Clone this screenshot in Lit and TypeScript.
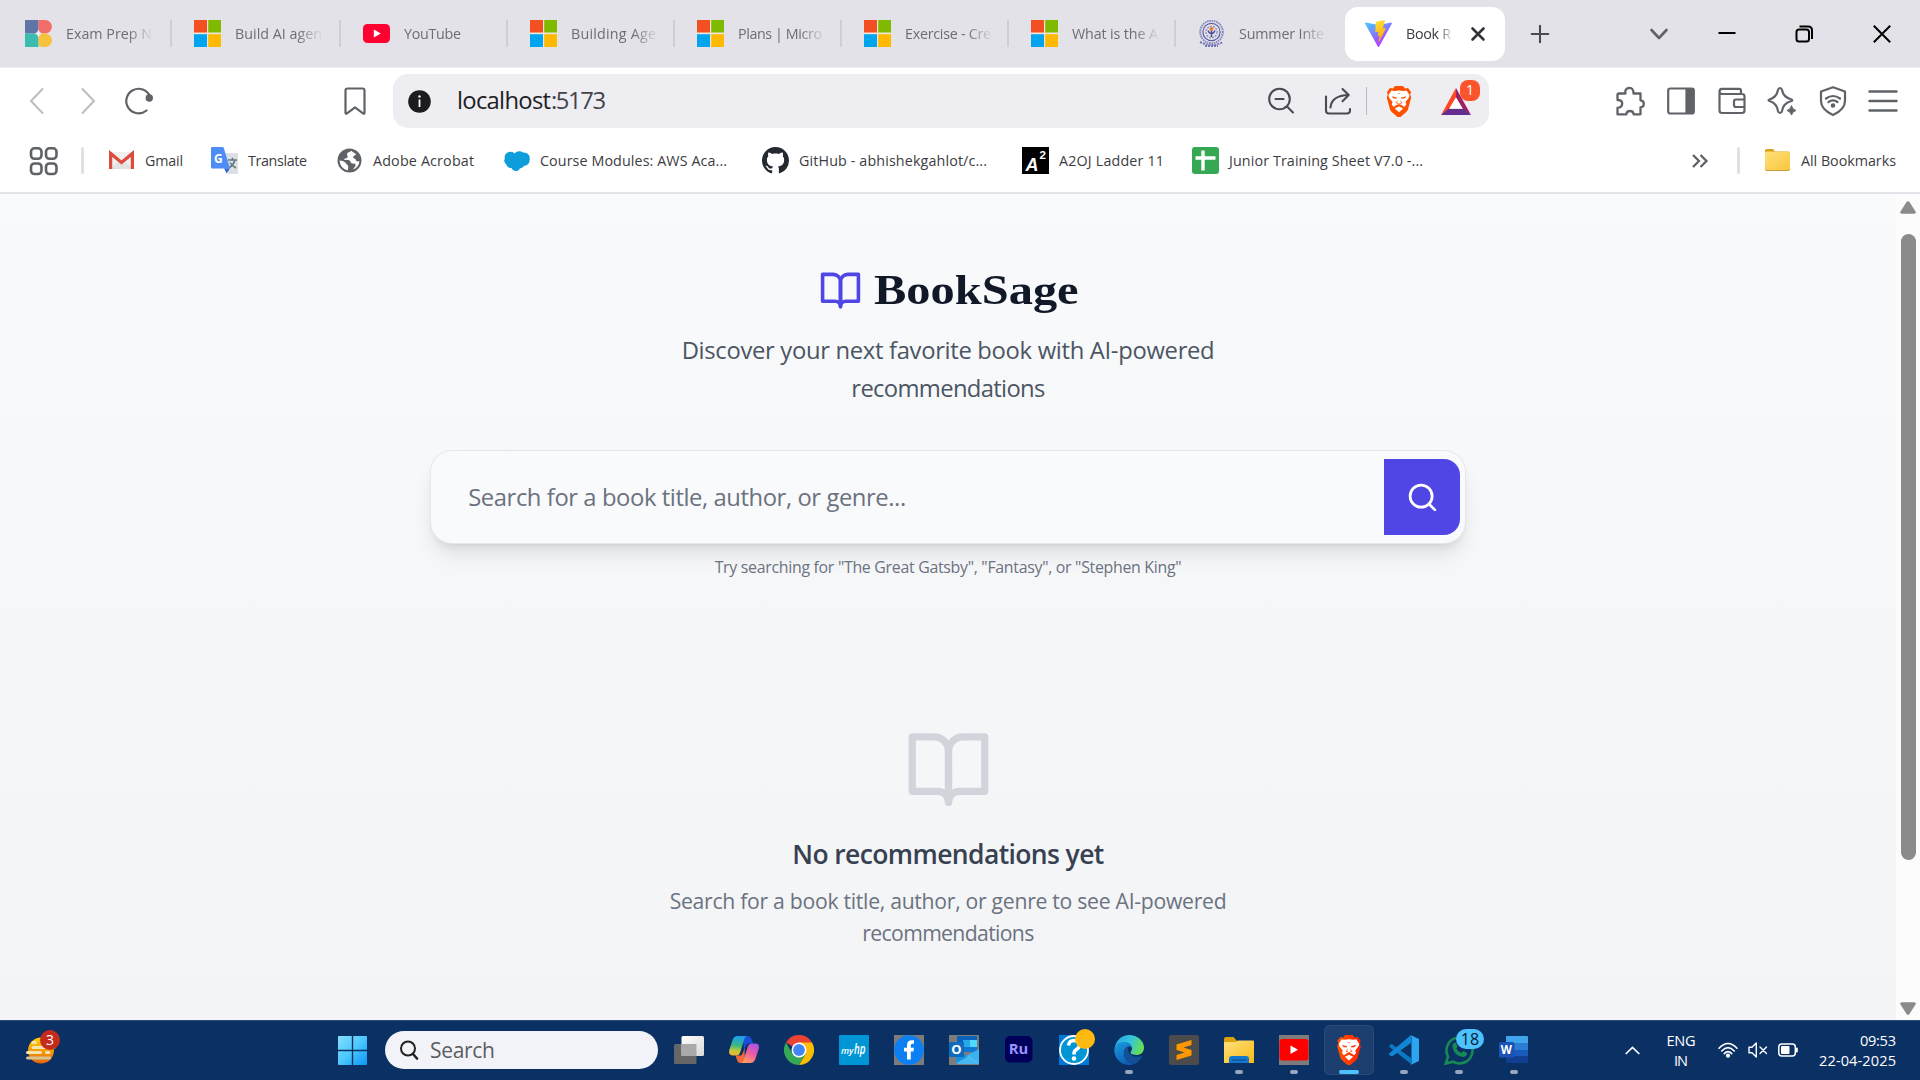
import { LitElement, html, svg, css, nothing } from "lit";
import { customElement, property } from "lit/decorators.js";

/* Single-line label that tracks its letters so the text spans exactly `w` pixels. */
@customElement("fit-text")
class FitText extends LitElement {
  @property({ type: Number }) w = 0;
  @property() text = "";
  static styles = css`
    :host { display: inline-block; white-space: pre; flex: none; }
    .t { display: inline-block; }
  `;
  render() {
    return html`<span class="t">${this.text}</span>`;
  }
  updated() {
    const t = this.renderRoot.querySelector(".t") as HTMLElement;
    t.style.letterSpacing = "0px";
    const natural = t.getBoundingClientRect().width;
    const n = Math.max(1, this.text.length - 1);
    t.style.letterSpacing = `${(this.w - natural) / n}px`;
    this.style.width = `${this.w}px`;
  }
}

const box = (w: number, h: number, body: unknown, vb = `0 0 ${w} ${h}`) =>
  html`<svg width=${w} height=${h} viewBox=${vb} fill="none">${body}</svg>`;

const line = (body: unknown, color = "#5f6368", sw = 2.2, size = 30) =>
  html`<svg width=${size} height=${size} viewBox="0 0 30 30" fill="none" stroke=${color}
    stroke-width=${sw} stroke-linecap="round" stroke-linejoin="round">${body}</svg>`;

const microsoft = box(27, 27, svg`
  <rect width="27" height="27" fill="#efe6d8"/>
  <path fill="#f25022" d="M0 0h13v12.5H0z"/><path fill="#7fba00" d="M14.2 0H27v12.5H14.2z"/>
  <path fill="#00a4ef" d="M0 14.2h13V27H0z"/><path fill="#ffb900" d="M14.2 14.2H27V27H14.2z"/>`);

const exam = box(27, 27, svg`
  <path fill="#5f75a8" d="M0 0h13.5v9.5a4 4 0 0 1-4 4H0z"/>
  <path fill="#f26d6a" d="M13.5 0h6.7a6.75 6.75 0 0 1 0 13.5h-2.7a4 4 0 0 1-4-4z"/>
  <path fill="#3bbcae" d="M0 13.5h9.5a4 4 0 0 1 4 4V27H0z"/>
  <path fill="#f7c23c" d="M17.5 13.5h2.7a6.75 6.75 0 0 1 0 13.5h-2.7a4 4 0 0 1-4-4v-5.500a4 4 0 0 1 4-4z"/>
  <path fill="#eceaf0" d="M13.500 9.300q.8 3.400 4 4.200q-3.200.8-4 4.200q-.8-3.400-4-4.200q3.200-.8 4-4.200z"/>`);

const youtube = box(27, 27, svg`<rect y="4" width="27" height="19" rx="4.500" fill="#ff0033"/>
  <path fill="#fff" d="M10.800 9.600v7.800l7-3.900z"/>`);

const crest = box(27, 27, svg`
  <circle cx="13.500" cy="12" r="11.300" stroke="#8a8abf" stroke-width="2" stroke-dasharray="1.600 .7"/>
  <circle cx="13.500" cy="12" r="8.600" stroke="#5b5ba6" stroke-width="1.200"/>
  <circle cx="13.500" cy="12" r="5.600" stroke="#8f8fc4" stroke-width="1.400" stroke-dasharray="2 1"/>
  <path stroke="#4c4c9c" stroke-width="1.500" d="M13.500 9v8M10 10.500q1 3 3.500 3.500q2.500-.5 3.500-3.500"/>
  <circle cx="13.500" cy="9" r="2" fill="#ee7d3b"/>
  <path stroke="#7777b6" stroke-width="2" stroke-dasharray="2 1" d="M2 22q11.500 6 23 0M7 26h13"/>`);

const vite = box(27, 27, svg`
  <defs>
    <linearGradient id="va" x1="0" y1="0" x2=".6" y2="1"><stop stop-color="#41d1ff"/><stop offset=".7" stop-color="#9b5cff"/><stop offset="1" stop-color="#bd34fe"/></linearGradient>
    <linearGradient id="vb" x1=".4" y1="0" x2=".6" y2="1"><stop stop-color="#ffdd35"/><stop offset="1" stop-color="#ffa800"/></linearGradient>
  </defs>
  <path fill="url(#va)" d="M26.800 3.800 14.200 26.500a.8.800 0 0 1-1.400 0L.1 3.800a.8.800 0 0 1 .8-1.200l12.600 2.300L26 2.600a.8.800 0 0 1 .8 1.200z"/>
  <path fill="url(#vb)" d="M19.500.1 11.500 1.800q-.8.200-.8.800l-.4 9.200c0 .4.300.5.600.5l2.600-.6-.8 3.900c0 .3.200.5.500.4l1.600-.5-1.200 6c0 .4.400.6.600.2l6.600-13.100c.1-.3-.1-.5-.4-.5l-2.600.5L20 .5q0-.4-.5-.4z"/>`);

const brave = (w: number, h: number, grad = false) => box(w, h, svg`
  <defs><linearGradient id="brg" x1="0" y1="0" x2="1" y2="0"><stop stop-color="#ff5500"/><stop offset="1" stop-color="#ff2000"/></linearGradient></defs>
  <path fill=${grad ? "url(#brg)" : "#ff5000"} d="M7 2.500 9 0h8l2 2.500 3-.5 3 4-.8 2.500 1 3-3.400 12.500-1.500 2L14.500 31h-3l-5.800-5-1.500-2L.8 11.500l1-3L1 6l3-4z"/>
  <path fill="#fff" d="M13 4.500 17.500 5l3-.5 3 4.500-.5 2.500-3.500 4.500.8 2.500-2 2.500-3-2.200L13 18.300l-2.300.5-3 2.200-2-2.500.8-2.500L3 11.500 2.500 9l3-4.500 3 .5zM13 20.300l4.200 2.200L13 26.300 8.800 22.500z"/>
  <path fill=${grad ? "url(#brg)" : "#ff5000"} d="m5.500 10.200 5.500 1.300-.5 1.300-3.300-.5zM20.500 10.200 15 11.500l.5 1.300 3.300-.5zM11.300 7.500h3.400l-.8.500h-1.800zM11 13l.7 2.500-1.200 1 2.500 1.200 2.500-1.200-1.200-1L15 13l-.3 2 1.800 1.700-3.500 1.800-3.500-1.800L11.300 15z"/>`, "0 0 26 31");

const globe = box(27, 27, svg`<circle cx="13.500" cy="13.500" r="12" fill="#5f6368"/>
  <path fill="#fff" d="M15 3.800c-1 1.700-3.500 1.200-4 3-.3 1.500 1 2.200.6 3.500-.6 1.600-3 .6-3.600 2.400l4.500.2c2.300.3 2 3.300 4 3.700 1.600.3 3.600-.2 3 2.200-.4 1.500-1.800 2-2.500 3.800a10 10 0 0 0 6.400-8.600c-1.600.8-3.400.3-3.700-1.300-.2-1.500-2.600-.6-2.500-2.600.2-1.700 2.400-1 2.700-3z"/>
  <path fill="#fff" d="M3.600 13.600c2.300 0 5.500 1.300 6.500 3 .6 1.200 2.300 1.500 2.200 3.200l-.6 3.600a10 10 0 0 1-8.100-9.800z"/>`);

const gmail = box(27, 27, svg`<path fill="#efefef" d="M2 5h23v17H2z"/><path fill="#d9d9d9" d="m2 22 9-8 2.500 2 2.500-2 9 8z" opacity=".6"/>
  <path stroke="#dd4b3e" stroke-width="3.200" d="M2.600 22V6.500l10.900 9 10.900-9V22"/>`);

const translate = box(27, 27, svg`
  <path fill="#dcdfe3" d="M12 6h14q1 0 1 1v19q0 1-1 1H17z"/><path fill="#3a67cf" d="m13 21 6 .5-3.500 5z"/>
  <path fill="#4e8df5" d="M1 0h10.500q1 0 1.300 1L19 21.500H1q-1 0-1-1V1Q0 0 1 0z"/>
  <path stroke="#5d7680" stroke-width="1.500" d="M17 13h9M21.500 10.800V13M24 13q-1.500 5-5.500 7.500M19 15.500q2 3.500 6 5.500"/>
  <text x="3" y="15.500" font-family="Open Sans" font-size="12" font-weight="700" fill="#fff">G</text>`);

const cloud = box(27, 27, svg`<path fill="#0d9dda" d="M11.500 6.500a6 6 0 0 1 8.500-1 5.800 5.800 0 0 1 6.700 6.500q.3 6.500-5.800 7a4.800 4.800 0 0 1-4 2.500q-1.500 3-4.500 2.500-3-.5-4-3.100a4.700 4.700 0 0 1-5-3.200Q0 14.500 1.800 12q-.6-3.500 1-5 1.500-2.500 5-2.300Q10.500 4.800 11.500 6.500z"/>`);

const github = box(27, 27, svg`<path fill="#24292f" d="M8 0C3.580 0 0 3.580 0 8c0 3.540 2.290 6.530 5.470 7.590.4.070.55-.17.55-.38 0-.19-.01-.82-.01-1.490-2.010.37-2.530-.49-2.690-.94-.09-.23-.48-.94-.82-1.130-.28-.15-.68-.52-.01-.53.63-.01 1.080.58 1.230.82.72 1.210 1.870.87 2.330.66.07-.52.28-.87.51-1.070-1.780-.2-3.640-.89-3.640-3.950 0-.87.31-1.590.82-2.150-.08-.2-.36-1.020.08-2.120 0 0 .67-.21 2.200.82.64-.18 1.320-.27 2-.27s1.360.09 2 .27c1.530-1.040 2.200-.82 2.200-.82.44 1.100.16 1.920.08 2.120.51.56.82 1.270.82 2.150 0 3.070-1.870 3.750-3.650 3.950.29.25.54.73.54 1.480 0 1.070-.01 1.930-.01 2.200 0 .21.15.46.55.38A8.010 8.010 0 0 0 16 8c0-4.420-3.580-8-8-8z"/>`, "0 0 16 16");

const a2oj = box(27, 27, svg`<rect width="27" height="27" fill="#000"/>
  <text x="3.500" y="23.500" font-family="Liberation Sans" font-size="19" font-weight="700" font-style="italic" textLength="13" lengthAdjust="spacingAndGlyphs" fill="#fff">A</text>
  <text x="17.500" y="11.500" font-family="Liberation Sans" font-size="11.500" font-weight="700" fill="#fff">2</text>`);

const sheet = box(27, 27, svg`<rect width="27" height="27" rx="3" fill="#34a853"/>
  <path stroke="#fff" stroke-width="3.400" d="M11 3.500v20M3.500 11h20"/>`);

const folder = box(27, 27, svg`<defs><linearGradient id="fo" x1="0" y1="0" x2="1" y2="1"><stop stop-color="#ffe07a"/><stop offset="1" stop-color="#fac63c"/></linearGradient></defs>
  <path fill="#d9a014" d="M1 4q0-2 2-2h6l2.500 3H24v4H1z"/><rect x="1" y="4.500" width="25" height="19.500" rx="2" fill="#c99a35"/><rect x="1" y="4.500" width="25" height="18.500" rx="2" fill="url(#fo)"/>`);

const book = (size: number, color: string) => html`<svg width=${size} height=${size} viewBox="0 0 24 24" fill="none"
  stroke=${color} stroke-width="2" stroke-linecap="round" stroke-linejoin="round">
  <path d="M2 3h6a4 4 0 0 1 4 4v14a3 3 0 0 0-3-3H2z"/><path d="M22 3h-6a4 4 0 0 0-4 4v14a3 3 0 0 1 3-3h7z"/></svg>`;

/* ---- taskbar artwork, 30x30 each ---- */
const t = (b: unknown) => box(30, 30, b);
const taskview = t(svg`<defs><linearGradient id="tv" x1="0" y1="0" x2="1" y2="1"><stop stop-color="#fff"/><stop offset="1" stop-color="#d8d8da"/></linearGradient></defs>
  <rect x="0" y="9" width="22.500" height="20" rx="1.500" fill="#666"/><rect x="7.500" y="1" width="22.500" height="20" rx="1.500" fill="url(#tv)"/>
  <path d="M7.500 9h15v12h-15z" fill="#a9a9a9"/>`);
const copilot = t(svg`<defs>
  <linearGradient id="c1" x1=".3" y1="0" x2=".2" y2="1"><stop stop-color="#1aa0f0"/><stop offset=".45" stop-color="#37b586"/><stop offset=".75" stop-color="#c5c93a"/><stop offset="1" stop-color="#f5b52c"/></linearGradient>
  <linearGradient id="c2" x1=".8" y1="0" x2=".3" y2="1"><stop stop-color="#a656e8"/><stop offset=".5" stop-color="#ee5aa3"/><stop offset="1" stop-color="#ffa05c"/></linearGradient></defs>
  <path fill="#1b4fd8" d="M14 1h5q2.500 0 3.300 2.500l1.700 5h-4q-2.500 0-3.300 2.500L15 16z"/>
  <path fill="#f2693c" d="M16 28h-4.500q-2.500 0-3.300-2.500L6.500 20.500H11q2 0 2.800-2.500L15.500 13z"/>
  <path fill="url(#c1)" d="M8.500 1H18q-2 .6-2.700 3l-4 13q-1 3.500-4 3.500H4q-5 0-3.700-5.500L3.600 5Q5 1 8.500 1z"/>
  <path fill="url(#c2)" d="M21.500 28H12q2-.6 2.700-3l4-13q1-3.500 4-3.500H26q5 0 3.700 5.500L26.400 24Q25 28 21.500 28z"/>`);
const chrome = t(svg`<path fill="#ea4335" d="M15 15 2 7.500a15 15 0 0 1 26 0z"/><path fill="#fbbc04" d="M15 7.500h13A15 15 0 0 1 15 30l6.500-11.200z"/>
  <path fill="#34a853" d="M2 7.500 8.500 18.800 21.500 18.800 15 30A15 15 0 0 1 2 7.500z"/><circle cx="15" cy="15" r="7.500" fill="#fff"/><circle cx="15" cy="15" r="5.900" fill="#4285f4"/>`);
const myhp = t(svg`<rect width="30" height="30" rx="1" fill="#0096d6"/>
  <text x="2" y="18.500" font-family="Open Sans" font-size="9.500" font-style="italic" font-weight="600" textLength="12.500" lengthAdjust="spacingAndGlyphs" fill="#fff">my</text>
  <text x="15" y="18.500" font-family="Open Sans" font-size="14" font-style="italic" font-weight="600" textLength="11.500" lengthAdjust="spacingAndGlyphs" fill="#fff">hp</text>`);
const facebook = t(svg`<path fill="#7d7b7c" d="M0 0h30v30H0z"/><circle cx="15" cy="15" r="14.800" fill="#0c7ff2"/>
  <path fill="#fff" d="M13 24.500v-8h-3v-3.800h3v-2.500q0-5 5-5h2v3.600h-1.500q-1.700 0-1.700 1.700v2.200h3.200l-.6 3.800h-2.600v8z"/>`);
const outlook = t(svg`<path fill="#7d7b7c" d="M0 0h30v30H0z"/><path fill="#0a63b8" d="M8 1h20v14H8z"/><path fill="#28a8ea" d="M14 5h7v7h-7z"/><path fill="#50d9ff" d="M21 5h7v7h-7z"/><path fill="#0f78d4" d="M14 12h14v5H14z"/>
  <path fill="#1490df" d="m7 14 23 15H9q-2 0-2-2z"/><path fill="#37b4ee" d="M30 14v15L17 21z"/><path fill="#5cc8f5" d="M7 28l13-7 10 7q0 1-2 1H9z" opacity=".7"/>
  <rect y="7" width="15" height="15" rx="1" fill="#0f6cbd"/><text x="2.300" y="19.300" font-family="Open Sans" font-size="13" font-weight="700" fill="#fff">O</text>`);
const rush = t(svg`<rect x="1" y="1" width="27.500" height="26.500" rx="5" fill="#00005b"/>
  <text x="4.700" y="18.800" font-family="Open Sans" font-size="15" font-weight="700" textLength="19.500" lengthAdjust="spacingAndGlyphs" fill="#9b93ff">Ru</text>`);
const help = t(svg`<path fill="#0078d7" d="M0 0h30v30H0z"/><circle cx="15" cy="15" r="14" fill="#0096d6" stroke="#fff" stroke-width="1.800"/>
  <path stroke="#fff" stroke-width="3.500" d="M9.500 10.500q.5-5 5.500-5t5.500 4.500q0 2.500-2.800 4.300-2.700 1.700-2.700 4.200v1"/><circle cx="15" cy="23.500" r="2.300" fill="#fff"/>`);
const edge = t(svg`<defs>
  <linearGradient id="e1" x1="0" y1=".3" x2="1" y2=".6"><stop stop-color="#2aa5e8"/><stop offset=".5" stop-color="#35c5d8"/><stop offset="1" stop-color="#6be04a"/></linearGradient>
  <linearGradient id="e2" x1="0" y1="0" x2=".5" y2="1"><stop stop-color="#1b9de2"/><stop offset="1" stop-color="#0c5fb5"/></linearGradient></defs>
  <path fill="url(#e1)" d="M.5 13.500C2 5 8 0 15 0c8.500 0 15 6 15 12.500 0 5-3.500 7.500-7.500 7.500-3.500 0-6-1-6-2.500 0-1 1.500-1.500 1.500-4S15 7.500 11 7.500 2 9.500.5 13.500z"/>
  <path fill="url(#e2)" d="M.3 16C0 9.500 5.500 7 10.500 7c4.500 0 7.300 2.500 7.500 5.500-3.500-2.500-8 .5-8 5.500C10 24 15 28.500 19 29.300 9 32 1 25 .3 16z"/>
  <path fill="#124f96" d="M10 18c0-3 1.500-5.500 4-6.300-1 7 5 11.800 13 9.300.8 0 1 .5.6 1.200C25 26.500 22 29 19 29.400 14 28.500 10 24 10 18z"/>`);
const sublime = t(svg`<rect width="30" height="30" rx="2" fill="#4b4b4b"/>
  <path fill="#ff9800" d="M22.500 5v5l-8 2.500 8 2.500v5.500L7.500 25v-5l8-2.500-8-2.500V9.500z"/>`);
const explorer = t(svg`<defs><linearGradient id="ex" x1="0" y1="0" x2="1" y2="1"><stop stop-color="#ffe07c"/><stop offset="1" stop-color="#f9b916"/></linearGradient></defs>
  <path fill="#dca10b" d="M0 4q0-2 2-2h7.500l3.500 4H28v8H0z"/><path fill="url(#ex)" d="M0 8q0-1 1-1h10l3-1.500h15q1 0 1 1V28H0z"/>
  <path fill="#1477cc" d="M5 24q0-3 3-3h14q3 0 3 3v4H5z"/><path stroke="#0c4f92" stroke-width="1.200" d="M8 25h14"/>`);
const ytapp = t(svg`<path fill="#7d7b7c" d="M0 0h30v30H0z"/><rect x=".5" y="4" width="29" height="21.500" rx="3" fill="#f00"/><path fill="#fff" d="M11.500 10.500v8.500l7.500-4.250z"/>`);
const vscode = t(svg`<path fill="#0a79c4" d="m0 11 2.500-2.200L22 23v6L0 11.500z"/><path fill="#0f86d6" d="M0 18.500 22 0v8L3 21.500 0 19.800z"/>
  <path fill="#2ba5f0" d="M21.500 0 30 4v22l-8.500 4q1-1 1-3V3q0-2-1-3z"/>`);
const whatsapp = t(svg`<path stroke="#158a56" stroke-width="2.600" d="M1.800 28.500 4 21.500A13 13 0 1 1 9 26.700z"/>
  <path fill="#158a56" d="M9 9q1.500-2.500 3-1l1.500 3.500-1.200 2q1.700 3.200 5 4.600l2-2 3.800 1.900q-.2 3.700-4.200 4Q10.500 21 8.500 12.500q-.2-2 .5-3.500z"/>`);
const word = t(svg`<path fill="#41a5ee" d="M7 2q0-1 1-1h20q1 0 1 1v6H7z"/><path fill="#2b7cd3" d="M7 8h22v7H7z"/><path fill="#185abd" d="M7 15h22v6.500H7z"/><path fill="#103f91" d="M7 21.500h22V27q0 1-1 1H8q-1 0-1-1z"/>
  <rect y="7" width="15.500" height="15.500" rx="1.500" fill="#1c52b5"/><text x="1.800" y="18.600" font-family="Open Sans" font-size="11.500" font-weight="700" fill="#fff">W</text>`);

const tabs: [unknown, string, number, string][] = [
  [exam, "Exam Prep N", 86, "wide"], [microsoft, "Build AI agen", 87, "wide"], [youtube, "YouTube", 57, ""],
  [microsoft, "Building Age", 85, ""], [microsoft, "Plans | Micro", 84, ""], [microsoft, "Exercise - Cre", 86, ""],
  [microsoft, "What is the A", 86, ""], [crest, "Summer Inte", 85, "last"],
];
const marks: [unknown, string, number, string][] = [
  [gmail, "Gmail", 38, ""], [translate, "Translate", 59, "mid"], [globe, "Adobe Acrobat", 101, "mid"],
  [cloud, "Course Modules: AWS Aca...", 187, "long"], [github, "GitHub - abhishekgahlot/c...", 188, "long"],
  [a2oj, "A2OJ Ladder 11", 105, ""], [sheet, "Junior Training Sheet V7.0 -...", 194, ""],
];
const apps: { icon: unknown; badge?: string; kind?: string; run?: boolean; active?: boolean }[] = [
  { icon: taskview }, { icon: copilot }, { icon: chrome }, { icon: myhp }, { icon: facebook }, { icon: outlook },
  { icon: rush }, { icon: help, badge: "", kind: "dot" }, { icon: edge, run: true }, { icon: sublime },
  { icon: explorer, run: true }, { icon: ytapp, run: true }, { icon: brave(26, 30, true), active: true },
  { icon: vscode, run: true }, { icon: whatsapp, badge: "18", kind: "count", run: true }, { icon: word, run: true },
];

@customElement("app-root")
class AppRoot extends LitElement {
  static styles = css`
    :host { display: flex; flex-direction: column; width: 1920px; height: 1080px; overflow: hidden;
      font-family: "Open Sans", "Noto Sans", sans-serif; background: #fff; }
    * { box-sizing: border-box; }
    svg { display: block; flex: none; }
    .row { display: flex; align-items: center; flex: none; }
    .grow { flex: 1; }

    .tabs { height: 68px; background: #e3e2e8; padding-left: 3px; border-bottom: 1px solid #efeef2; }
    .tab { width: 167px; height: 27px; padding-left: 22px; border-right: 2px solid #cfced4; gap: 14px;
      font-size: 14.300px; color: #6d6d74; }
    .tab.wide { width: 169px; }
    .tab.last { border-right-color: transparent; }
    .fade { width: 88px; overflow: hidden; line-height: 26px; -webkit-mask-image: linear-gradient(90deg, #000 62px, #0000 88px); mask-image: linear-gradient(90deg, #000 62px, #0000 88px); }
    .tab.active { width: 160px; height: 54px; margin-left: 2px; padding-left: 20px; border: 0; border-radius: 13px; background: #fff; color: #3b3b42; }
    .tab.active .fade { width: 47px; -webkit-mask-image: linear-gradient(90deg, #000 32px, #0000 48px); mask-image: linear-gradient(90deg, #000 32px, #0000 48px); }
    .m-x { margin-left: 3px; margin-right: -1px; }
    .m-plus { margin-left: 20px; }
    .m-down { margin-left: 89px; }
    .m-min { margin-left: 38px; }
    .m-max { margin-left: 47px; }
    .m-close { margin-left: 48px; }

    .tools { height: 66px; padding-left: 22px; }
    .g21 { margin-left: 21px; }
    .g20 { margin-left: 20px; }
    .m-mark { margin-left: 186px; }
    .m-ext { margin-left: 126px; }
    .url { width: 1096px; height: 54px; margin-left: 23px; padding: 0 18px 0 15px; border-radius: 15px; background: #eeedf2; }
    .addr { margin-left: 26px; font-size: 23.800px; color: #1d1d22; line-height: 50px; height: 54px; padding-bottom: 2px; }
    .port { color: #44444b; }
    .m-share { margin-left: 27px; }
    .vr { width: 1px; height: 28px; margin-left: 13px; background: #b9b8bf; }
    .m-lion { margin-left: 19px; }
    .bat { position: relative; margin-left: 29px; }
    .bat .n { position: absolute; left: 19px; top: -8px; width: 20px; height: 21px; border-radius: 8px; background: #fb542b; color: #fff;
      font-size: 14px; line-height: 20px; text-align: center; }

    .marks { height: 60px; padding: 0 24px 5px 29px; border-bottom: 2px solid #e3e4e9; font-size: 14.300px; color: #3c3d42; }
    .marks .row { gap: 10px; margin-right: 28px; line-height: 26px; }
    .marks .row.mid { margin-right: 29px; }
    .marks .row.long { margin-right: 35px; }
    .sep { width: 3px; height: 27px; border-radius: 2px; background: #e1e0e6; flex: none; }
    .s1 { margin: 0 24px 0 23px; }
    .s2 { margin: 0 24px 0 28px; }
    .marks .all { margin-right: 0; }

    .view { display: flex; flex: 1; min-height: 0; }
    .page { flex: 1; display: flex; flex-direction: column; align-items: center; background: linear-gradient(#f9fafb, #f3f4f6); text-align: center; }
    .brand { height: 50px; margin-top: 71px; gap: 12px; }
    .name { width: 204px; text-align: left; font: 700 42.500px/50px "Liberation Serif", serif; color: #111827; }
    .name span { display: inline-block; transform: scaleX(1.140); transform-origin: 0 50%; }
    .tag { display: flex; flex-direction: column; align-items: center; margin-top: 16px; font-size: 23.800px; line-height: 38px; color: #4b5563; }
    .search { width: 1036px; height: 94px; margin-top: 43px; padding: 0 5px 0 37px; border: 1px solid #e5e7eb; border-radius: 22px; background: #f9fafb;
      box-shadow: 0 14px 21px -4px rgba(0,0,0,.1), 0 5px 8px -5px rgba(0,0,0,.12); }
    .ph { font-size: 23.800px; color: #6b7280; line-height: 40px; }
    .go { width: 76px; height: 76px; border-radius: 0 16px 16px 0; background: #4f46e5; display: grid; place-items: center; }
    .hint { margin-top: 11px; font-size: 15.900px; line-height: 24px; color: #6b7280; }
    .empty { display: flex; flex-direction: column; align-items: center; margin-top: 147px; }
    .h { margin-top: 22px; font-size: 26.500px; line-height: 38px; font-weight: 600; color: #374151; }
    .p { display: flex; flex-direction: column; align-items: center; margin-top: 12px; font-size: 21.200px; line-height: 32px; color: #6b7280; }
    .bar { width: 24px; background: #fcfcfc; display: flex; flex-direction: column; align-items: center; justify-content: space-between; padding: 7px 1px 5px 1px; }
    .thumb { width: 15px; height: 626px; margin-bottom: 123px; border-radius: 8px; background: #8b8b8b; }

    .task { height: 60px; background: #0a3064; border-top: 1px solid #2c4d7b; color: #fff; padding: 0 24px 1px 26px; }
    .weather { position: relative; }
    .weather .n { position: absolute; left: 14px; top: -7px; width: 20px; height: 20px; border-radius: 50%; background: #c42b1c; font-size: 14px; line-height: 19px; text-align: center; }
    .start { margin-left: 282px; }
    .find { width: 273px; height: 38px; margin: 0 3px 0 18px; padding-left: 14px; gap: 11px; border-radius: 19px; background: #f2f3f8; color: #5c5c60; font-size: 21px; line-height: 36px; }
    .app { position: relative; width: 50px; height: 50px; margin-right: 5px; display: grid; place-items: center; border-radius: 6px; flex: none; }
    .first { margin-left: 3px; }
    .app.active { background: #1d3f70; box-shadow: inset 0 0 0 1px #2a4a78; }
    .dash { position: absolute; bottom: 1px; left: 21px; width: 8px; height: 4px; border-radius: 2px; background: #98a5be; }
    .active .dash { left: 15px; width: 20px; background: #4cc2ff; }
    .badge { position: absolute; top: 4px; height: 20px; border-radius: 10px; }
    .dot { left: 26px; width: 20px; background: #ffb90f; }
    .count { left: 22px; width: 28px; background: #4cc2ff; color: #06192f; font-size: 16px; line-height: 20px; text-align: center; }
    .lang { display: flex; flex-direction: column; align-items: center; margin-left: 26px; width: 30px; font-size: 14.600px; line-height: 20px; }
    .m-wifi { margin-left: 22px; }
    .m-clock { margin-left: 21px; }
    .m-tray { margin-left: 10px; }
    .clock { display: flex; flex-direction: column; align-items: flex-end; font-size: 14.600px; line-height: 20px; margin-top: -1px; }
  `;

  render() {
    return html`
      <div class="row tabs">
        ${tabs.map(([icon, text, w, k]) => html`<div class="row tab ${k}">${icon}<div class="fade"><fit-text w=${w} text=${text}></fit-text></div></div>`)}
        <div class="row tab active">${vite}<div class="fade"><fit-text w="45" text="Book R"></fit-text></div>
          <svg class="m-x" width="16" height="16" viewBox="0 0 16 16" stroke="#33343a" stroke-width="2.600" stroke-linecap="round"><path d="m2.500 2.500 11 11m0-11-11 11"/></svg></div>
        <svg class="m-plus" width="30" height="30" viewBox="0 0 30 30" stroke="#4a4b50" stroke-width="2.100" stroke-linecap="round"><path d="M15 6.700v16.600M6.700 15h16.600"/></svg>
        <svg class="m-down" width="30" height="30" viewBox="0 0 30 30" fill="none" stroke="#5f6368" stroke-width="2.600" stroke-linecap="round" stroke-linejoin="round"><path d="m7.500 11 7.500 8 7.500-8"/></svg>
        <svg class="m-min" width="30" height="30" viewBox="0 0 30 30" stroke="#000" stroke-width="2"><path d="M6.500 14h17"/></svg>
        <svg class="m-max" width="30" height="30" viewBox="0 0 30 30" fill="none" stroke="#000" stroke-width="2"><rect x="7.500" y="10.500" width="12.500" height="12" rx="2.500"/><path d="M10.500 7.500h8.500q4 0 4 4v8.500"/></svg>
        <svg class="m-close" width="30" height="30" viewBox="0 0 30 30" stroke="#000" stroke-width="2"><path d="m6.800 6.800 16.400 16.400m0-16.400L6.800 23.200"/></svg>
      </div>

      <div class="row tools">
        ${line(svg`<path d="M20.500 3 9 15l11.500 12"/>`, "#bdbdc2", 2)}
        <div class="g21">${line(svg`<path d="M9.500 3 21 15 9.500 27"/>`, "#bdbdc2", 2)}</div>
        <div class="g21">${line(svg`<path d="M22.500 24.500A12.300 12.300 0 1 1 26 10.500"/><circle cx="25.300" cy="12" r="2.600" fill="#5f6368"/>`)}</div>
        <div class="m-mark">${line(svg`<path d="M5.500 4.500q0-2 2-2h15q2 0 2 2v22.300q0 1.500-1.500.5L15 21.300l-8 6q-1.500 1-1.500-.5z"/>`)}</div>
        <div class="row url">
          <svg width="23" height="23" viewBox="0 0 23 23"><circle cx="11.500" cy="11.500" r="11.300" fill="#1b1b20"/><circle cx="11.500" cy="6.500" r="1.200" fill="#fff"/><path stroke="#fff" stroke-width="1.800" d="M11.500 9.500v7.500"/></svg>
          <div class="row addr"><fit-text w="94" text="localhost"></fit-text><fit-text class="port" w="55" text=":5173"></fit-text></div>
          <div class="grow"></div>
          ${line(svg`<circle cx="13.500" cy="13" r="10.300"/><path d="m21 20.500 6 6M9.500 13h8"/>`, "#4a4b52", 2.100)}
          <div class="m-share">${line(svg`<path d="M3 10.500v14q0 3 3 3h18q3 0 3-3V23M7.500 21.500Q8.500 9.500 25.500 9M19.500 3l6.200 6-6.200 6.200"/>`, "#4a4b52", 2.100)}</div>
          <div class="vr"></div>
          <div class="m-lion">${brave(26, 31)}</div>
          <div class="bat">
            <svg width="30" height="27" viewBox="0 0 30 27"><path fill="#ff4724" d="M15 0v9.500L8.500 20.500 0 27z"/><path fill="#9e1f63" d="M15 0v9.500l6.500 11L30 27z"/><path fill="#662d91" d="M0 27 7.500 20.500h15L30 27z"/><path fill="#fff" d="m15 9.500 6.800 11.300H8.200z"/></svg>
            <span class="n">1</span>
          </div>
        </div>
        <div class="m-ext">${line(svg`<path d="M4 7.500h6.500Q9.500 2.500 14 2t4.500 5.500h7v6.800q3.500.4 3.300 3.700t-3.300 3.300v7h-6.800q-.4-3.300-3.700-3.300t-3.700 3.300H2.500v-6.500Q7 21.500 7.200 17.800T2.500 14V9q0-1.500 1.500-1.500z"/>`, "#5f6368", 2.300)}</div>
        <div class="g21">${line(svg`<rect x="2.200" y="2.500" width="25.600" height="25" rx="2"/><path fill="#5f6368" d="M20.500 3h6.500v24h-6.500z"/>`)}</div>
        <div class="g21">${line(svg`<path d="M2.500 5.500v19q0 2.500 2.500 2.500h20q2.500 0 2.500-2.500v-14q0-2.500-2.500-2.500H5Q2.500 8 2.500 5.500T5 2.800h17q2 0 2 2V8M27.500 13.500H19q-2 0-2 2v3.500q0 2 2 2h8.500"/>`)}</div>
        <div class="g20">${line(svg`<path d="M13 2q1.500 0 2 2 1.300 7.300 9.500 9.500 1.500.5 0 1.500Q16.300 17 15 25q-.5 2-2 2t-2-2Q9.700 17 2.500 15q-2-.9 0-1.500Q9.700 11.300 11 4q.5-2 2-2z"/><path fill="#5f6368" stroke-width="1" d="M24.500 20q.9 3.700 4.500 4.500-3.600.8-4.500 4.500-.9-3.700-4.500-4.500 3.600-.8 4.500-4.500z"/>`)}</div>
        <div class="g21">${line(svg`<path d="M15 1.300 27 5.500V15q0 8.500-12 14Q3 23.500 3 15V5.500z"/><path d="M8 12.500q7-5 14 0M10.500 16q4.500-3.200 9 0"/><circle cx="15" cy="19.500" r="1.200" fill="#5f6368"/>`)}</div>
        <div class="g20">${line(svg`<path d="M1.500 5.500h27M1.500 15h27M1.500 24.500h27"/>`, "#5f6368", 2.400)}</div>
      </div>

      <div class="row marks">
        <svg width="29" height="30" viewBox="0 0 29 30" fill="none" stroke="#5f6368" stroke-width="2.600"><rect x="2" y="2.300" width="10.500" height="10.500" rx="3.500"/><rect x="17" y="2.300" width="10.500" height="10.500" rx="3.500"/><rect x="2" y="17.500" width="10.500" height="10.500" rx="3.500"/><rect x="17" y="17.500" width="10.500" height="10.500" rx="3.500"/></svg>
        <div class="sep s1"></div>
        ${marks.map(([icon, text, w, k]) => html`<div class="row ${k}">${icon}<fit-text w=${w} text=${text}></fit-text></div>`)}
        <div class="grow"></div>
        <svg width="18" height="16" viewBox="0 0 18 16" fill="none" stroke="#5f6368" stroke-width="2.300"><path d="m2 2 6 6-6 6M9.500 2l6 6-6 6"/></svg>
        <div class="sep s2"></div>
        <div class="row all">${folder}<fit-text w="95" text="All Bookmarks"></fit-text></div>
      </div>

      <div class="view">
        <div class="page">
          <div class="row brand">${book(43, "#4f46e5")}<div class="name"><span>BookSage</span></div></div>
          <div class="tag"><fit-text w="533" text="Discover your next favorite book with AI-powered"></fit-text><fit-text w="194" text="recommendations"></fit-text></div>
          <div class="row search">
            <fit-text class="ph" w="438" text="Search for a book title, author, or genre..."></fit-text>
            <div class="grow"></div>
            <div class="go"><svg width="33" height="33" viewBox="0 0 24 24" fill="none" stroke="#fff" stroke-width="2" stroke-linecap="round" stroke-linejoin="round"><circle cx="11" cy="11" r="8"/><path d="m21 21-4.300-4.300"/></svg></div>
          </div>
          <div class="hint"><fit-text w="467" text='Try searching for "The Great Gatsby", "Fantasy", or "Stephen King"'></fit-text></div>
          <div class="empty">
            ${book(87, "#d1d5db")}
            <div class="h"><fit-text w="312" text="No recommendations yet"></fit-text></div>
            <div class="p"><fit-text w="557" text="Search for a book title, author, or genre to see AI-powered"></fit-text><fit-text w="172" text="recommendations"></fit-text></div>
          </div>
        </div>
        <div class="bar">
          <svg width="16" height="13" viewBox="0 0 16 13"><path fill="#8b8b8b" d="M6.500 1Q8-.7 9.500 1l6 9.500q.8 2-1 2.300h-13Q-.3 12.500.5 10.500z"/></svg>
          <div class="thumb"></div>
          <svg width="16" height="13" viewBox="0 0 16 13"><path fill="#8b8b8b" d="M6.500 12Q8 13.700 9.500 12l6-9.500Q16.300.5 14.500.2h-13Q-.3.5.5 2.500z"/></svg>
        </div>
      </div>

      <div class="row task">
        <div class="weather">
          <svg width="30" height="27" viewBox="0 0 30 27" fill="none"><defs><linearGradient id="sun" x1="0" y1="0" x2="0" y2="1"><stop stop-color="#ffd400"/><stop offset="1" stop-color="#e8640c"/></linearGradient></defs>
            <circle cx="15" cy="13.500" r="13" fill="url(#sun)"/><path stroke="#f6e3b0" stroke-width="3" stroke-linecap="round" d="M7 5.500h2.500M7 10.500h21M1.500 15.500h13M20.500 15.500h2.500"/><path stroke="#d9c391" stroke-width="3" stroke-linecap="round" d="M1.500 21h22"/></svg>
          <span class="n">3</span>
        </div>
        <svg class="start" width="29" height="29" viewBox="0 0 29 29"><defs><linearGradient id="w" x1="0" y1="0" x2="1" y2="1"><stop stop-color="#85dcfc"/><stop offset=".5" stop-color="#4cc8fd"/><stop offset="1" stop-color="#0a95f7"/></linearGradient></defs>
          <path fill="url(#w)" d="M1 0h12.800v13.800H0V1q0-1 1-1zM15.200 0H28q1 0 1 1v12.800H15.200zM0 15.200h13.800V29H1q-1 0-1-1zM15.200 15.200H29V28q0 1-1 1H15.200z"/></svg>
        <div class="row find">
          <svg width="20" height="20" viewBox="0 0 20 20" fill="none" stroke="#222" stroke-width="2" stroke-linecap="round"><circle cx="9" cy="8.500" r="7"/><path stroke-width="2.600" d="m14 14 4 4.500"/></svg>
          <fit-text w="65" text="Search"></fit-text>
        </div>
        ${apps.map((a, i) => html`<div class="app ${a.active ? "active" : ""} ${i === 0 ? "first" : ""}">${a.icon}
          ${a.badge !== undefined ? html`<span class="badge ${a.kind}">${a.badge}</span>` : nothing}
          ${a.run || a.active ? html`<span class="dash"></span>` : nothing}</div>`)}
        <div class="grow"></div>
        <svg width="15" height="9" viewBox="0 0 15 9" fill="none" stroke="#fff" stroke-width="1.700" stroke-linecap="round"><path d="m1.200 7.500 6.300-6 6.300 6"/></svg>
        <div class="lang"><fit-text w="29" text="ENG"></fit-text><fit-text w="14" text="IN"></fit-text></div>
        <svg class="m-wifi" width="20" height="16" viewBox="0 0 20 16" fill="none" stroke="#fff" stroke-width="1.600" stroke-linecap="round"><path d="M1 6.200q9-9.500 18 0M3.700 9q6.300-6.700 12.600 0M6.300 11.600q3.700-4 7.400 0"/><circle cx="10" cy="13.700" r="1.300" fill="#fff"/></svg>
        <svg class="m-tray" width="20" height="16" viewBox="0 0 20 16" fill="none" stroke="#fff" stroke-width="1.400" stroke-linecap="round" stroke-linejoin="round"><path d="M1 5.200h3L8.300 1v14L4 10.800H1zM12 5l6.500 6.500m0-6.500L12 11.500"/></svg>
        <svg class="m-tray" width="20" height="14" viewBox="0 0 20 14" fill="none"><rect x=".8" y="1" width="16.500" height="12" rx="3" stroke="#fff" stroke-width="1.500"/><rect x="3" y="3" width="8.500" height="8" rx="1" fill="#fff"/><path stroke="#fff" stroke-width="2" stroke-linecap="round" d="M18.800 5.500v3"/></svg>
        <div class="clock m-clock"><fit-text w="36" text="09:53"></fit-text><fit-text w="77" text="22-04-2025"></fit-text></div>
      </div>
    `;
  }
}
